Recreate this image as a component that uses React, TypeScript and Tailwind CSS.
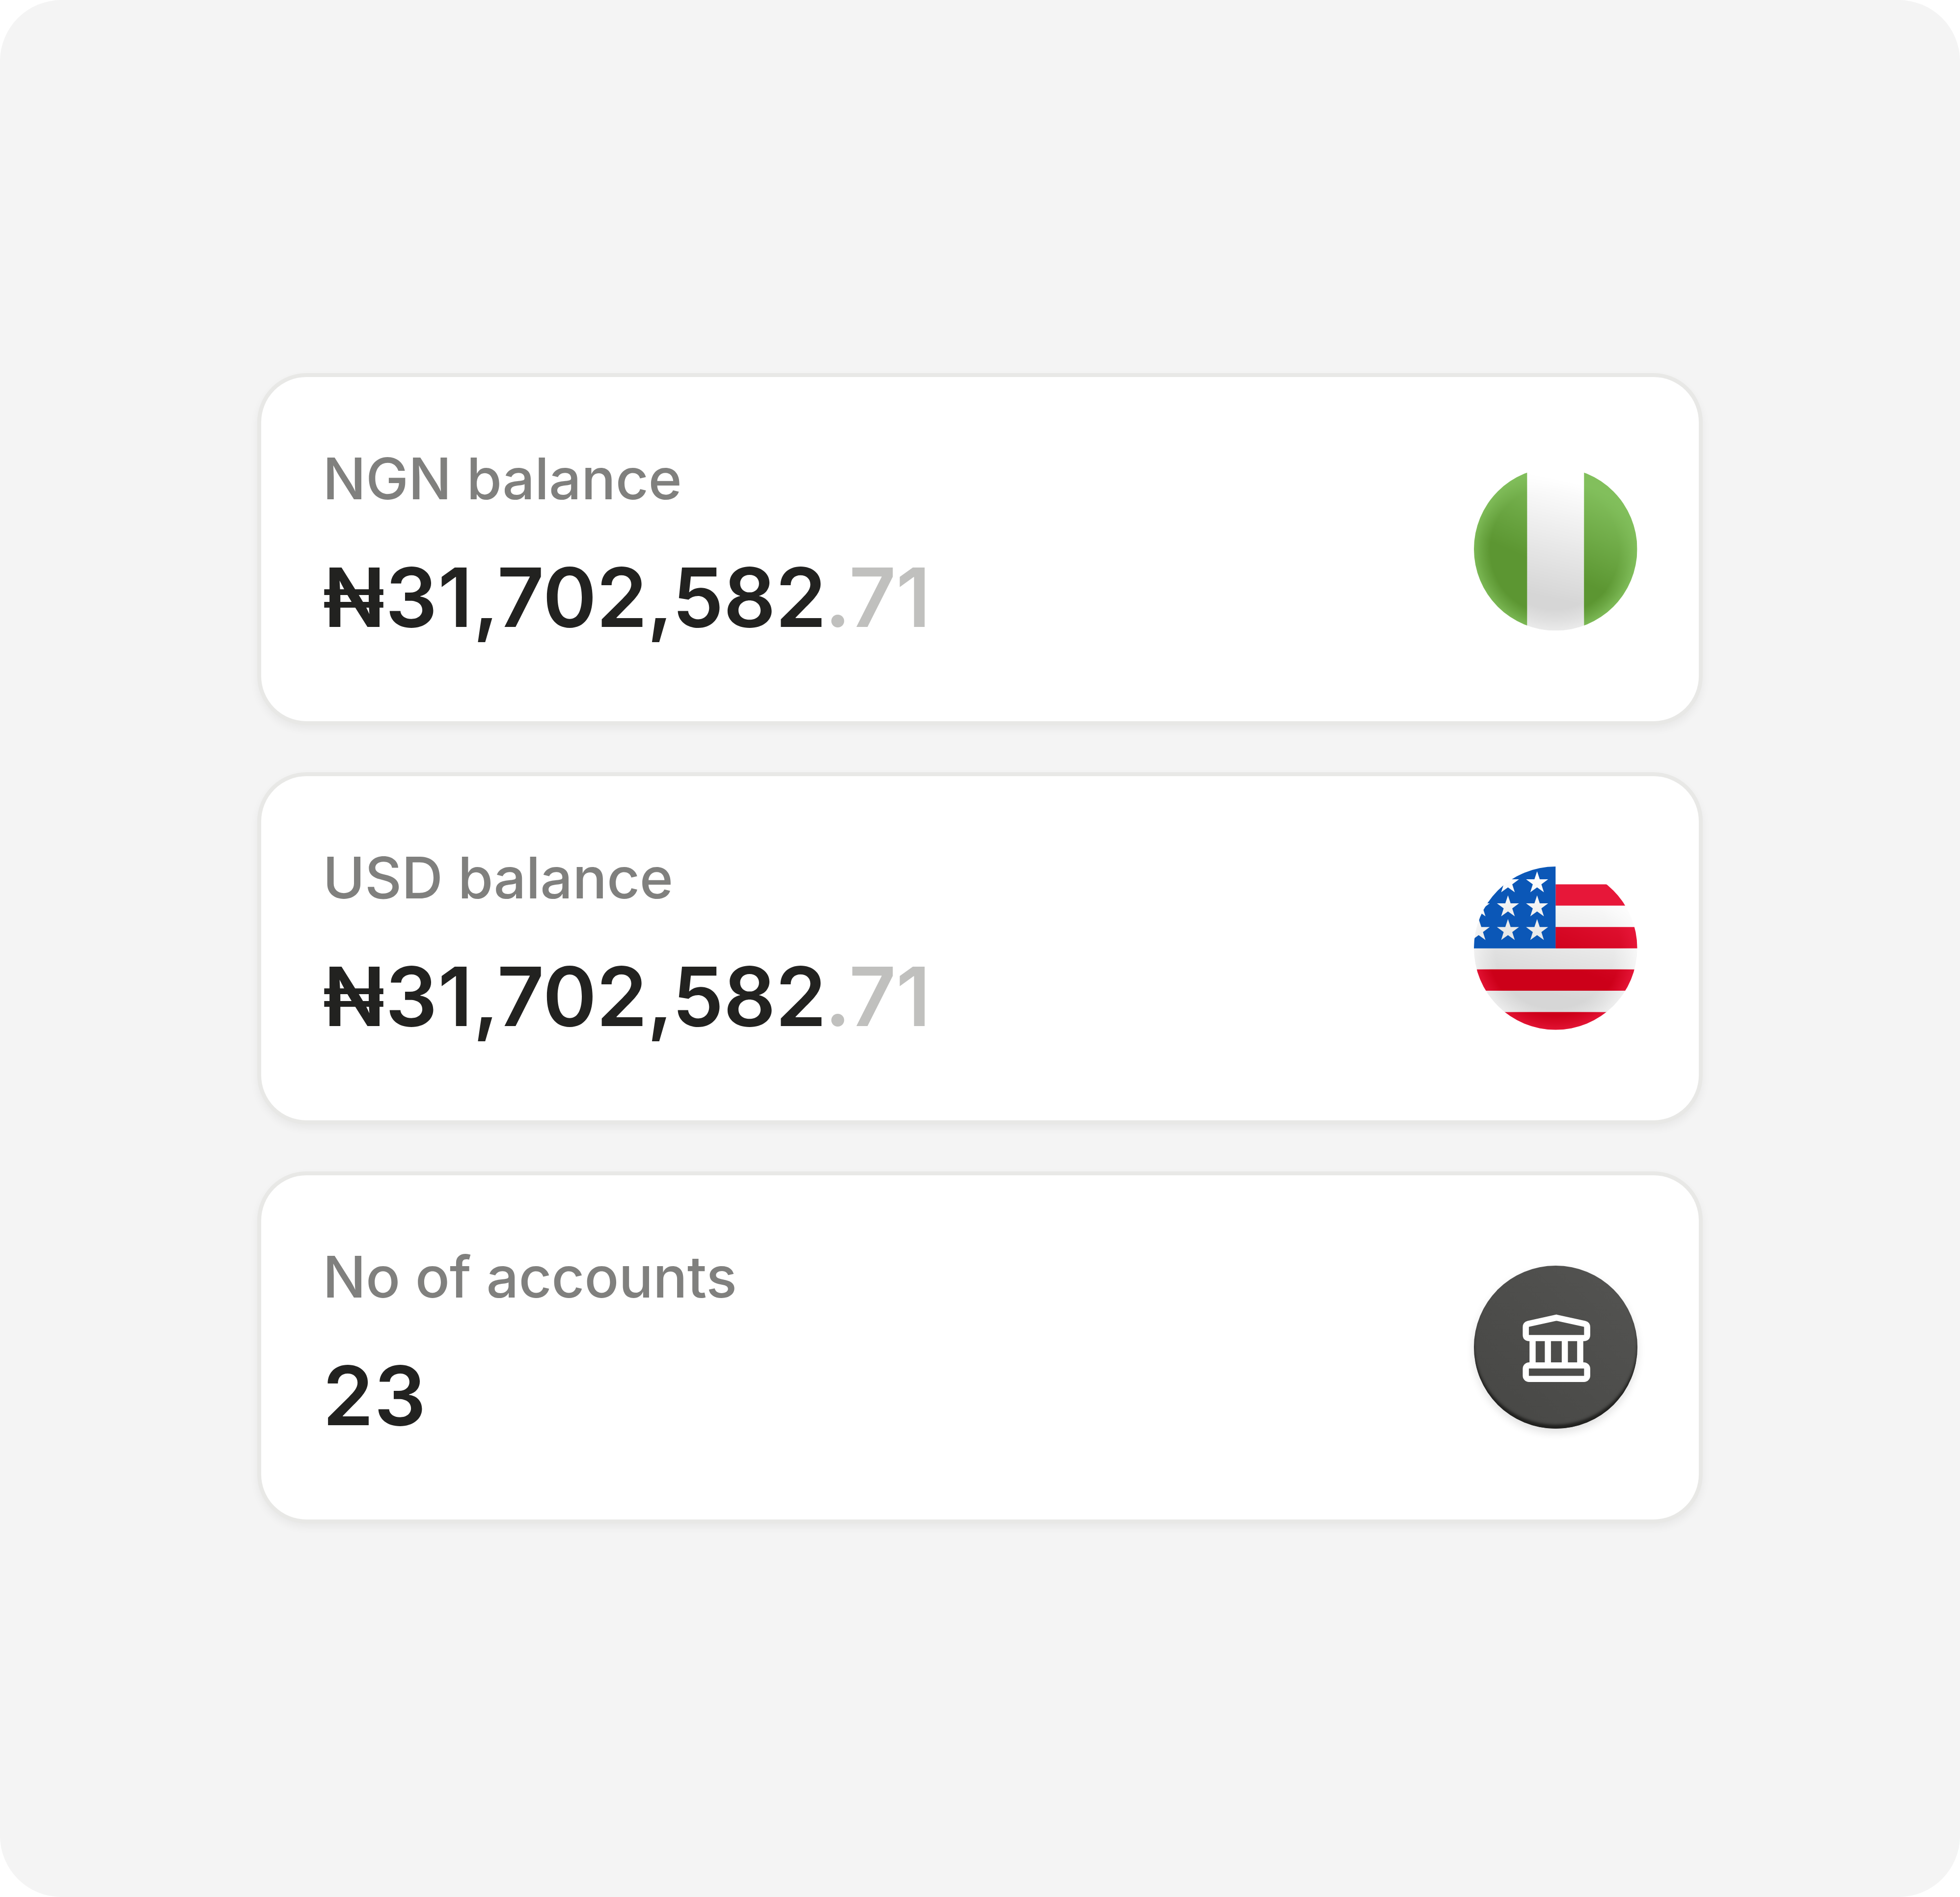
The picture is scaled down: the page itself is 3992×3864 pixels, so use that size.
import { useId, type ReactNode } from "react";

type GlossProps = { id: string; cy: number; reach: number; tilt: number; rim: number; rimStart: number };

/* Shading of the glossy flag badges: darkest near the bottom, lit from the top and round the rim. */
function GlossMask({ id, cy, reach, tilt, rim, rimStart }: GlossProps) {
  return (
    <>
      <linearGradient
        id={`${id}-lin`}
        gradientUnits="userSpaceOnUse"
        x1={564 + tilt}
        y1={cy - 420}
        x2={564 - tilt}
        y2={cy + reach}
      >
        <stop offset="0" stopColor="#fff" stopOpacity="0" />
        <stop offset="1" stopColor="#fff" stopOpacity="1" />
      </linearGradient>
      <radialGradient id={`${id}-rad`} gradientUnits="userSpaceOnUse" cx="558" cy={cy + 6} r="505">
        <stop offset={rimStart} stopColor="#000" stopOpacity="0" />
        <stop offset={(rimStart + 1) / 2} stopColor="#000" stopOpacity={rim * 0.45} />
        <stop offset="1" stopColor="#000" stopOpacity={rim} />
      </radialGradient>
      <mask id={`${id}-mask`} maskUnits="userSpaceOnUse" x="0" y="0" width="1140" height="1140">
        <rect width="1140" height="1140" fill={`url(#${id}-lin)`} />
        <rect width="1140" height="1140" fill={`url(#${id}-rad)`} />
      </mask>
    </>
  );
}

function NigeriaBadge() {
  const id = useId().replace(/[^a-zA-Z0-9]/g, "");
  return (
    <svg className="size-[332.6px] shrink-0" viewBox="65 68 998 998">
      <defs>
        <GlossMask id={id} cy={567} reach={290} tilt={80} rim={0.55} rimStart={0.72} />
        <GlossMask id={`${id}g`} cy={567} reach={80} tilt={110} rim={0.95} rimStart={0.78} />
        <clipPath id={`${id}-clip`}>
          <circle cx="564" cy="567" r="499" />
        </clipPath>
      </defs>
      <g clipPath={`url(#${id}-clip)`}>
        <rect x="65" y="68" width="998" height="998" fill="#fff" />
        <rect x="65" y="68" width="325" height="998" fill="#82bf5c" />
        <rect x="738" y="68" width="325" height="998" fill="#82bf5c" />
        <rect x="390" y="68" width="348" height="998" fill="#d6d6d6" mask={`url(#${id}-mask)`} />
        <g mask={`url(#${id}g-mask)`}>
          <rect x="65" y="68" width="325" height="998" fill="#5c9632" />
          <rect x="738" y="68" width="325" height="998" fill="#5c9632" />
        </g>
      </g>
    </svg>
  );
}

const RED_STRIPES = [170, 431, 690, 951];
const STARS = [
  [273, 161],
  [451, 161],
  [94, 308],
  [273, 308],
  [451, 308],
  [94, 453],
  [273, 453],
  [451, 453],
];

function starPath(cx: number, cy: number) {
  let d = "";
  for (let i = 0; i < 10; i++) {
    const r = i % 2 === 0 ? 71 : 27.5;
    const a = (Math.PI / 5) * i - Math.PI / 2;
    d += `${i === 0 ? "M" : "L"}${(cx + r * Math.cos(a)).toFixed(1)} ${(cy + r * Math.sin(a)).toFixed(1)}`;
  }
  return d + "Z";
}

function UsaBadge() {
  const id = useId().replace(/[^a-zA-Z0-9]/g, "");
  return (
    <svg className="size-[332.6px] shrink-0" viewBox="65 61 998 998">
      <defs>
        <GlossMask id={id} cy={560} reach={270} tilt={80} rim={0.6} rimStart={0.72} />
        <GlossMask id={`${id}r`} cy={560} reach={30} tilt={100} rim={0.95} rimStart={0.8} />
        <clipPath id={`${id}-clip`}>
          <circle cx="564" cy="560" r="499" />
        </clipPath>
      </defs>
      <g clipPath={`url(#${id}-clip)`}>
        <rect x="65" y="61" width="998" height="998" fill="#fff" />
        <rect x="65" y="61" width="998" height="998" fill="#d6d6d6" mask={`url(#${id}-mask)`} />
        {RED_STRIPES.map((y) => (
          <rect key={y} x={y < 560 ? 564 : 65} y={y} width="998" height="130" fill="#e71739" />
        ))}
        <g mask={`url(#${id}r-mask)`}>
          {RED_STRIPES.slice(1).map((y) => (
            <rect key={y} x={y < 560 ? 564 : 65} y={y} width="998" height="130" fill="#cc0019" />
          ))}
        </g>
        <path
          fill="#0b57b7"
          fillRule="evenodd"
          d={"M0 0H564V561H0Z" + STARS.map(([x, y]) => starPath(x, y)).join("")}
        />
      </g>
    </svg>
  );
}

function BankBadge() {
  return (
    <div className="size-[332.6px] shrink-0 rounded-full bg-linear-to-tr from-[#464644] to-[#545452] shadow-[0_8px_17px_rgba(0,0,0,0.12),inset_0_-8px_5px_#222220]">
      <svg className="size-full" viewBox="65 54.4 998 998" fill="none" stroke="#fff" strokeWidth="37.5">
        <path d="M569.5 372.5L741 410Q757 414 757 430V478Q757 497 738 497H401Q382 497 382 478V430Q382 414 398 410Z" />
        <path d="M423.500 510V650M517 510V650M620.500 510V650M714.500 510V650" />
        <rect x="382" y="664" width="375" height="83" rx="20" />
      </svg>
    </div>
  );
}

type CardProps = {
  label: string;
  lead: string;
  rest?: string;
  fraction?: string;
  badge: ReactNode;
};

function BalanceCard({ label, lead, rest, fraction, badge }: CardProps) {
  return (
    <section className="flex h-[717.2px] w-[2943.600px] items-center justify-between rounded-[100px] border-[8.3px] border-[#e8e8e6] bg-white px-[125px] shadow-[0_8px_17px_rgba(0,0,0,0.05)]">
      <div className="mb-[11.6px] flex flex-col gap-[42px]">
        <p className="text-[116.4px] leading-[166px] font-medium tracking-[-0.25px] text-[#80807e]">{label}</p>
        <p className="text-[166.3px] leading-[233px] font-semibold text-[#222220]">
          <span className="tracking-[1.2px]">{lead}</span>
          {rest && <span className="tracking-[-0.35px]">{rest}</span>}
          {fraction && <span className="-ml-[3px] text-[#c0c0be]">{fraction}</span>}
        </p>
      </div>
      {badge}
    </section>
  );
}

export default function App() {
  return (
    <div className="bg-white">
      <main className="flex h-[3864px] w-[3992px] flex-col items-center gap-[95.600px] rounded-[125px] bg-[#f4f4f4] pt-[760px] font-['Inter',sans-serif]">
        <BalanceCard label="NGN balance" lead="₦31" rest=",702,582" fraction=".71" badge={<NigeriaBadge />} />
        <BalanceCard label="USD balance" lead="₦31" rest=",702,582" fraction=".71" badge={<UsaBadge />} />
        <BalanceCard label="No of accounts" lead="23" badge={<BankBadge />} />
      </main>
    </div>
  );
}
